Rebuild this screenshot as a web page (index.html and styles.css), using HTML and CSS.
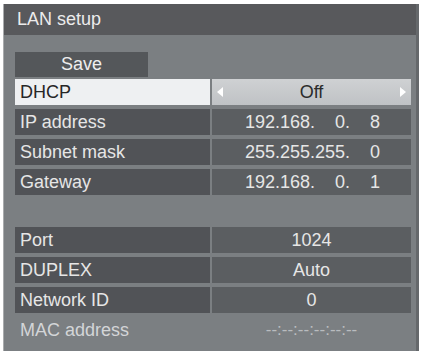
FILE: index.html
```html
<!DOCTYPE html>
<html>
<head>
<meta charset="utf-8">
<link rel="stylesheet" href="styles.css">
</head>
<body>
<div class="panel">
  <div class="title">LAN setup</div>
  <div class="body">
    <div class="save">Save</div>
    <div class="rows">
      <div class="row sel">
        <div class="label">DHCP</div>
        <div class="value">
          <span class="arrow left"></span>
          <span>Off</span>
          <span class="arrow right"></span>
        </div>
      </div>
      <div class="row">
        <div class="label">IP address</div>
        <div class="value"><span class="ip"><span class="oct">192</span>.<span class="oct">168</span>.<span class="oct">0</span>.<span class="oct">8</span></span></div>
      </div>
      <div class="row">
        <div class="label">Subnet mask</div>
        <div class="value"><span class="ip"><span class="oct">255</span>.<span class="oct">255</span>.<span class="oct">255</span>.<span class="oct">0</span></span></div>
      </div>
      <div class="row">
        <div class="label">Gateway</div>
        <div class="value"><span class="ip"><span class="oct">192</span>.<span class="oct">168</span>.<span class="oct">0</span>.<span class="oct">1</span></span></div>
      </div>
      <div class="spacer"></div>
      <div class="row">
        <div class="label">Port</div>
        <div class="value">1024</div>
      </div>
      <div class="row">
        <div class="label">DUPLEX</div>
        <div class="value">Auto</div>
      </div>
      <div class="row">
        <div class="label">Network ID</div>
        <div class="value">0</div>
      </div>
      <div class="row plain">
        <div class="label">MAC address</div>
        <div class="value">--:--:--:--:--:--</div>
      </div>
    </div>
  </div>
</div>
</body>
</html>
```
FILE: styles.css
```css
html, body {
  margin: 0;
  padding: 0;
  background: #ffffff;
}
body {
  padding: 4px 0 0 4px;
  font-family: "Liberation Sans", Arial, sans-serif;
  font-size: 18px;
}
.panel {
  width: 412px;
  height: 347px;
  background: #7b7f82;
  border-right: 3px solid #65686b;
  display: flex;
  flex-direction: column;
  box-shadow: -1px 0 0 #a9abad;
}
.title {
  height: 31px;
  background: #58595c;
  color: #ececec;
  line-height: 31px;
  padding-left: 13px;
  flex: none;
}
.body {
  padding: 17px 0 0 11px;
}
.save {
  width: 133px;
  height: 25px;
  line-height: 25px;
  background: #54575a;
  color: #eeeeee;
  text-align: center;
}
.rows {
  margin-top: 2px;
  display: flex;
  flex-direction: column;
  gap: 4px;
}
.row {
  display: flex;
  gap: 2px;
  height: 26px;
  line-height: 26px;
  color: #e6e6e6;
}
.label {
  width: 190px;
  padding-left: 5px;
  background: #515357;
}
.value {
  width: 199px;
  background: #5b5e61;
  text-align: center;
  position: relative;
}
.row.sel .label {
  background: #eef0f2;
  color: #262626;
}
.row.sel .value {
  background: linear-gradient(#cfd1d3, #bfc2c5);
  color: #2b2b2b;
}
.arrow {
  position: absolute;
  top: 8px;
  width: 0;
  height: 0;
  border-top: 5px solid transparent;
  border-bottom: 5px solid transparent;
}
.arrow.left {
  left: 5px;
  border-right: 6px solid #ffffff;
}
.arrow.right {
  right: 5px;
  border-left: 6px solid #ffffff;
}
.ip {
  display: inline-flex;
  padding-left: 2px;
}
.oct {
  display: inline-block;
  width: 30px;
  text-align: right;
}
.spacer {
  height: 24px;
}
.row.plain .label,
.row.plain .value {
  background: transparent;
}
.row.plain .label {
  color: #d3d5d7;
}
.row.plain .value {
  color: #b9bcbf;
  font-size: 17px;
}
```
